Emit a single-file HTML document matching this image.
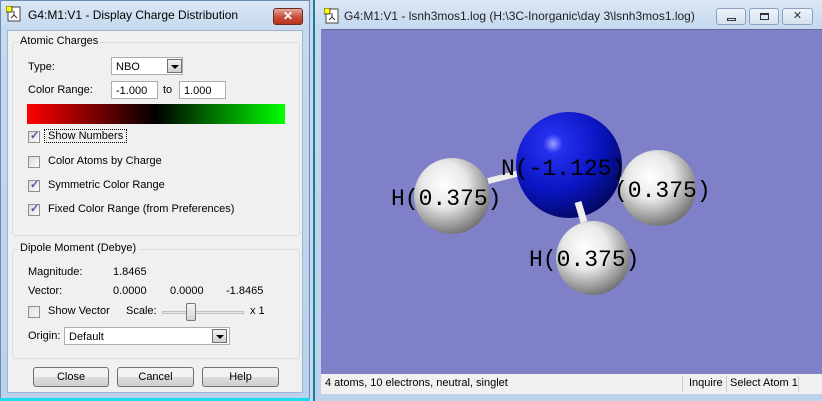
<!DOCTYPE html>
<html><head><style>
*{margin:0;padding:0;box-sizing:border-box}
body{width:822px;height:401px;overflow:hidden;background:#c6d9ee;font-family:"Liberation Sans",sans-serif;font-size:11px;color:#000;position:relative}
.a{position:absolute}
.frame{background:linear-gradient(#dbe7f4,#c4d8ee 30px,#bcd2ea)}
.inp{background:#fff;border:1px solid #abadb3;padding:2px 4px 0;font-size:11px;line-height:14px}
.cb{width:12px;height:12px;border:1px solid #8f8f8f;background:linear-gradient(135deg,#dcdcdc,#fafafa)}
.cb.c::after{content:"✓";position:absolute;left:1px;top:-3px;font-size:11px;color:#4a5f97;font-weight:bold}
.btn{border:1px solid #707070;border-radius:3px;background:linear-gradient(#f2f2f2 50%,#dddddd 50%,#cfcfcf);text-align:center;line-height:18px;font-size:11px}
.grp{border:1px solid #d5dfe5;border-radius:3px}
.gl{background:#f0f0f0;padding:0 2px}
.dd{width:15px;height:14px;border:1px solid #707070;background:linear-gradient(#f2f2f2,#d0d0d0)}
.dd::after{content:"";position:absolute;left:3px;top:5px;border:4px solid transparent;border-top:4px solid #000;border-bottom:0}
.tb{border:1px solid #8ca0bd;border-radius:3px;background:linear-gradient(#eef3fa,#d4e1f0)}
.L{font-size:11px}
</style></head><body>
<div class="a frame" style="left:0;top:0;width:310px;height:401px;border:1px solid #6b8db5"></div>
<div class="a" style="left:0;top:398px;width:310px;height:3px;background:#1ed8ef"></div>
<svg class="a" style="left:6px;top:6px" width="16" height="16"><rect x="2" y="1" width="12" height="14" fill="#fff" stroke="#444"/><rect x="0" y="0" width="6" height="6" fill="#ff0" stroke="#444"/><path d="M8 5v4M5 12l3-3 3 3" stroke="#333" fill="none"/></svg>
<div class="a" style="left:28px;top:8px;font-size:12px">G4:M1:V1 - Display Charge Distribution</div>
<div class="a" style="left:273px;top:8px;width:30px;height:17px;border:1px solid #6b2a24;border-radius:3px;background:linear-gradient(#e7a79b,#c8513f 50%,#b9331f);color:#fff;text-align:center;font-weight:bold;font-size:12px;line-height:15px">✕</div>
<div class="a" style="left:7px;top:30px;width:296px;height:363px;background:#f0f0f0;border:1px solid #9fb4cf"></div>
<div class="a grp" style="left:12px;top:42px;width:288px;height:194px"></div>
<div class="a gl L" style="left:18px;top:35px">Atomic Charges</div>
<div class="a L" style="left:28px;top:61px">Type:</div>
<div class="a inp" style="left:111px;top:57px;width:72px;height:18px">NBO</div>
<div class="a dd" style="left:167px;top:59px"></div>
<div class="a L" style="left:28px;top:84px">Color Range:</div>
<div class="a inp" style="left:111px;top:81px;width:47px;height:18px">-1.000</div>
<div class="a L" style="left:163px;top:84px">to</div>
<div class="a inp" style="left:179px;top:81px;width:47px;height:18px">1.000</div>
<div class="a" style="left:27px;top:104px;width:258px;height:20px;background:linear-gradient(90deg,#f00,#000 50%,#0f0)"></div>
<div class="a cb c" style="left:28px;top:131px"></div><div class="a L" style="left:44px;top:129px;border:1px dotted #000;padding:0 3px">Show Numbers</div>
<div class="a cb" style="left:28px;top:156px"></div><div class="a L" style="left:48px;top:155px">Color Atoms by Charge</div>
<div class="a cb c" style="left:28px;top:180px"></div><div class="a L" style="left:48px;top:179px">Symmetric Color Range</div>
<div class="a cb c" style="left:28px;top:204px"></div><div class="a L" style="left:48px;top:203px">Fixed Color Range (from Preferences)</div>
<div class="a grp" style="left:12px;top:249px;width:288px;height:110px"></div>
<div class="a gl L" style="left:18px;top:242px">Dipole Moment (Debye)</div>
<div class="a L" style="left:28px;top:266px">Magnitude:</div><div class="a L" style="left:113px;top:266px">1.8465</div>
<div class="a L" style="left:28px;top:285px">Vector:</div><div class="a L" style="left:113px;top:285px">0.0000</div><div class="a L" style="left:170px;top:285px">0.0000</div><div class="a L" style="left:226px;top:285px">-1.8465</div>
<div class="a cb" style="left:28px;top:306px"></div><div class="a L" style="left:48px;top:305px">Show Vector</div>
<div class="a L" style="left:126px;top:305px">Scale:</div>
<div class="a" style="left:162px;top:311px;width:82px;height:3px;border:1px solid #c0c0c0;background:#e6e6e6"></div>
<div class="a" style="left:186px;top:303px;width:10px;height:18px;border:1px solid #777;border-radius:2px;background:linear-gradient(#f4f4f4,#d4d4d4)"></div>
<div class="a L" style="left:250px;top:305px">x 1</div>
<div class="a L" style="left:28px;top:330px">Origin:</div>
<div class="a inp" style="left:64px;top:327px;width:166px;height:18px">Default</div>
<div class="a dd" style="left:212px;top:329px"></div>
<div class="a btn" style="left:33px;top:367px;width:76px;height:20px">Close</div>
<div class="a btn" style="left:117px;top:367px;width:77px;height:20px">Cancel</div>
<div class="a btn" style="left:202px;top:367px;width:77px;height:20px">Help</div>

<div class="a frame" style="left:313px;top:0;width:509px;height:401px;border-left:2px solid #1a7d9a"></div>
<svg class="a" style="left:324px;top:8px" width="16" height="16"><rect x="2" y="1" width="12" height="14" fill="#fff" stroke="#444"/><rect x="0" y="0" width="6" height="6" fill="#ff0" stroke="#444"/><path d="M8 5v4M5 12l3-3 3 3" stroke="#333" fill="none"/></svg>
<div class="a" style="left:344px;top:9px;font-size:12px;color:#222">G4:M1:V1 - lsnh3mos1.log (H:\3C-Inorganic\day 3\lsnh3mos1.log)</div>
<div class="a tb" style="left:716px;top:8px;width:30px;height:17px"><div class="a" style="left:10px;top:9px;width:9px;height:3px;border:1px solid #333"></div></div>
<div class="a tb" style="left:749px;top:8px;width:30px;height:17px"><div class="a" style="left:10px;top:4px;width:9px;height:7px;border:1px solid #333;border-top-width:2px"></div></div>
<div class="a tb" style="left:782px;top:8px;width:31px;height:17px;text-align:center;font-size:11px;line-height:15px;color:#333">✕</div>
<div class="a" style="left:321px;top:29px;width:501px;height:345px;background:#8080c8;border-top:1px solid #6a6a9a"></div>
<svg class="a" style="left:321px;top:30px" width="501" height="344">
<defs>
<radialGradient id="n" cx="0.35" cy="0.3" r="0.75"><stop offset="0" stop-color="#9aa0ff"/><stop offset="0.12" stop-color="#2530f0"/><stop offset="0.6" stop-color="#0a14c0"/><stop offset="1" stop-color="#020860"/></radialGradient>
<radialGradient id="h" cx="0.4" cy="0.35" r="0.75"><stop offset="0" stop-color="#fff"/><stop offset="0.4" stop-color="#e8e8e8"/><stop offset="1" stop-color="#5a5a5a"/></radialGradient>
</defs>
<g transform="translate(-321,-30)">
<path d="M488 181L520 173M608 176L622 181" stroke="#eee" stroke-width="6"/>
<circle cx="452" cy="196" r="38" fill="url(#h)"/>
<circle cx="658" cy="188" r="38" fill="url(#h)"/>
<circle cx="569" cy="165" r="53" fill="url(#n)"/>
<path d="M578 202L584 222" stroke="#eee" stroke-width="7"/>
<circle cx="593" cy="258" r="37" fill="url(#h)"/>
<g font-family="Liberation Mono,monospace" font-size="23" fill="#000">
<text x="501" y="175">N(-1.125)</text>
<text x="391" y="205">H(0.375)</text>
<text x="614" y="197">(0.375)</text>
<text x="529" y="266">H(0.375)</text>
</g></g></svg>
<div class="a" style="left:321px;top:374px;width:501px;height:20px;background:#f0f0f0"></div>
<div class="a" style="left:325px;top:377px;font-size:11px">4 atoms, 10 electrons, neutral, singlet</div>
<div class="a" style="left:682px;top:376px;width:1px;height:16px;background:#ccc"></div>
<div class="a" style="left:689px;top:377px;font-size:11px">Inquire</div>
<div class="a" style="left:726px;top:376px;width:1px;height:16px;background:#ccc"></div>
<div class="a" style="left:730px;top:377px;font-size:11px">Select Atom 1</div>
<div class="a" style="left:798px;top:376px;width:1px;height:16px;background:#ccc"></div>
</body></html>
